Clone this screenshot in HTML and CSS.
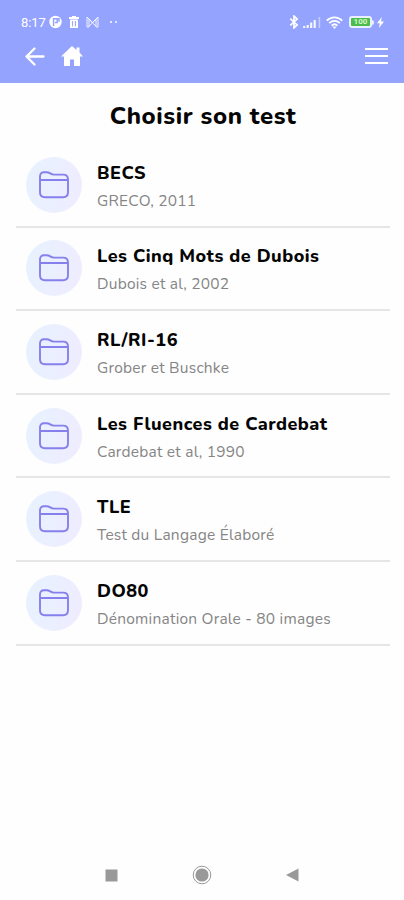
FILE: index.html
```html
<!DOCTYPE html>
<html lang="fr">
<head>
  <meta charset="UTF-8" />
  <meta name="viewport" content="width=device-width, initial-scale=1.0"/>
  <title>Choisir son test</title>
  <link rel="stylesheet" href="styles.css">
</head>
<body>
  <!-- folder icon shared by every row -->
  <svg class="sprite" aria-hidden="true">
    <symbol id="folder" viewBox="0 0 30 28">
      <path d="M1 9V5.5C1 2.800 2.400 1.200 5 1.200h2.600c3.400 0 3.800 2.400 7.200 2.400h9.400c3.400 0 4.800 1.700 4.800 4.800v12.800c0 3.400-1.600 5-5 5H6c-3.400 0-5-1.600-5-5V9h28"/>
    </symbol>
  </svg>

  <header class="header">
    <div class="status">
      <div class="status-left">
        <span class="clock">8:17</span>
        <svg width="13" height="14" viewBox="0 0 13 14"><circle cx="6.5" cy="7" r="6.2" fill="#fff"/><path d="M4.600 11V3.800h3.600v3.600H6M8.200 3.800h1.800v3" fill="none" stroke="#94a3fd" stroke-width="1.5"/></svg>
        <svg class="trash" width="10" height="12" viewBox="0 0 10 12"><path d="M0 1h3V0h4v1h3v2H0zM1 3.6h8V12H1z" fill="#fff"/><path d="M3.6 5v5.4M6.4 5v5.4" stroke="#94a3fd" stroke-width="1"/></svg>
        <svg class="mail" width="13" height="12" viewBox="0 0 13 12"><path d="M1 1v10h2V3l3.5 4L10 3v8h2V1L6.5 6.5zM3 10l3.5-3 3.5 3" fill="none" stroke="#fff" stroke-width="1" opacity=".85"/></svg>
        <span class="dots"><i></i><i></i></span>
      </div>
      <div class="status-right">
        <svg width="10" height="14" viewBox="0 0 10 15"><path d="M1 4l7.4 6.6L5 13.8V1.2l3.4 3.2L1 11" fill="none" stroke="#fff" stroke-width="1.8"/></svg>
        <svg class="signal" width="18" height="12" viewBox="0 0 18 12"><path d="M1.2 12v-2M4.700 12V9M8.200 12V6.500M11.700 12V4" stroke="#fff" stroke-width="2.200" opacity=".9"/><path d="M16.400 12V1" stroke="#fff" stroke-width="1.600" opacity=".45"/></svg>
        <svg class="wifi" width="17" height="13" viewBox="0 0 17 13"><path d="M.8 4.6c4.4-4.4 11-4.4 15.4 0M3.2 7.2c3.2-3 7.4-3 10.6 0M5.6 9.6c1.8-1.6 4-1.6 5.8 0" fill="none" stroke="#fff" stroke-width="1.8"/><path d="M6.3 10.4h4.4L8.5 13z" fill="#fff"/></svg>
        <span class="battery">100</span>
        <span class="battery-tip"></span>
        <svg class="bolt" width="7" height="11" viewBox="0 0 7 11"><path d="M4.8 0L0 6.2h2.8L2 11l5-6.600H4z" fill="#fff"/></svg>
      </div>
    </div>
    <nav class="navbar">
      <svg class="back" width="20" height="19" viewBox="0 0 20 19"><path d="M18.5 9.500H2M9.500 1.500l-8 8 8 8" fill="none" stroke="#fff" stroke-width="2.300" stroke-linecap="round" stroke-linejoin="round"/></svg>
      <svg class="home" width="22" height="20" viewBox="0 0 22 20"><path d="M11 0l4.500 4V1.600h3V6.600L22 10.400h-3V20h-6v-6.500H9V20H3v-9.600H0z" fill="#fff"/></svg>
      <div class="menu"><span></span><span></span><span></span></div>
    </nav>
  </header>

  <main class="content">
    <h1>Choisir son test</h1>
    <ul class="tests">
      <li class="test">
        <div class="icon"><svg class="folder"><use href="#folder"/></svg></div>
        <div class="text"><h2>BECS</h2><p>GRECO, 2011</p></div>
      </li>
      <li class="test">
        <div class="icon"><svg class="folder"><use href="#folder"/></svg></div>
        <div class="text"><h2>Les Cinq Mots de Dubois</h2><p>Dubois et al, 2002</p></div>
      </li>
      <li class="test">
        <div class="icon"><svg class="folder"><use href="#folder"/></svg></div>
        <div class="text"><h2>RL/RI-16</h2><p>Grober et Buschke</p></div>
      </li>
      <li class="test">
        <div class="icon"><svg class="folder"><use href="#folder"/></svg></div>
        <div class="text"><h2>Les Fluences de Cardebat</h2><p>Cardebat et al, 1990</p></div>
      </li>
      <li class="test">
        <div class="icon"><svg class="folder"><use href="#folder"/></svg></div>
        <div class="text"><h2>TLE</h2><p>Test du Langage Élaboré</p></div>
      </li>
      <li class="test">
        <div class="icon"><svg class="folder"><use href="#folder"/></svg></div>
        <div class="text"><h2>DO80</h2><p>Dénomination Orale - 80 images</p></div>
      </li>
    </ul>
  </main>

  <footer class="system-nav">
    <svg width="13" height="13" viewBox="0 0 13 13"><path d="M.5.5h12v12H.5z"/></svg>
    <svg width="20" height="20" viewBox="0 0 20 20"><circle cx="10" cy="10" r="6.6"/><circle class="ring" cx="10" cy="10" r="8.8"/></svg>
    <svg width="13" height="14" viewBox="0 0 13 14"><path d="M0 7L12.5.5v13z"/></svg>
  </footer>
</body>
</html>
```
FILE: styles.css
```css
* {
  box-sizing: border-box;
}
body {
  display: flex;
  flex-direction: column;
  height: 100vh;
  margin: 0;
  background-color: #fefefe;
  color: #050505;
  font-family: Nunito, "Open Sans", sans-serif;
}
svg {
  display: block;
  flex: none;
}
.sprite {
  width: 0;
  height: 0;
  position: absolute;
}
.header {
  height: 83px;
  background-color: #94a3fd;
  color: #fff;
}
.status {
  display: flex;
  justify-content: space-between;
  height: 44px;
  padding: 0 20px 0 21px;
}
.status-left, .status-right {
  display: flex;
  align-items: center;
}
.clock {
  width: 28px;
  font-family: Roboto, sans-serif;
  font-size: 13px;
  letter-spacing: -0.1px;
}
.trash {
  margin-left: 7px;
}
.mail {
  margin-left: 7px;
}
.dots {
  display: flex;
  gap: 3px;
  margin-left: 11px;
}
.dots i {
  width: 2px;
  height: 2px;
  border-radius: 50%;
  background-color: #fff;
}
.signal {
  margin-left: 4px;
}
.wifi {
  margin-left: 5px;
}
.battery {
  width: 23px;
  height: 12px;
  margin-left: 6px;
  border: 2px solid #e9effc;
  border-radius: 3px;
  background-color: #4bbd4f;
  font: bold 8px/8px Roboto, sans-serif;
  text-align: center;
  color: #d4f5c8;
}
.battery-tip {
  width: 2px;
  height: 5px;
  border-radius: 0 2px 2px 0;
  background-color: #e9effc;
}
.bolt {
  margin-left: 3px;
}
.navbar {
  display: flex;
  align-items: center;
  height: 24px;
  padding: 0 16px 0 25px;
}
.home {
  margin-left: 16px;
}
.menu {
  display: flex;
  flex-direction: column;
  gap: 5px;
  width: 23px;
  margin-left: auto;
}
.menu span {
  height: 2px;
  background-color: #fff;
}
.content {
  flex: 1;
  padding: 0 14px 0 16px;
}
h1 {
  height: 61px;
  margin: 0;
  padding-top: 16px;
  font-size: 24px;
  line-height: 34px;
  font-weight: 800;
  letter-spacing: 0.6px;
  text-align: center;
}
.tests {
  margin: 0;
  padding: 0;
  list-style: none;
}
.test {
  display: flex;
  align-items: center;
  height: 83.6px;
  padding-left: 10px;
  border-bottom: 2px solid #e6e6e6;
}
.icon {
  display: flex;
  align-items: center;
  justify-content: center;
  width: 56px;
  height: 56px;
  border-radius: 50%;
  background: linear-gradient(100deg, #e7f2ff, #efecff);
}
.folder {
  width: 30px;
  height: 28px;
  fill: none;
  stroke: #8580ec;
  stroke-width: 1.9;
}
.text {
  margin-left: 15px;
  padding-top: 3px;
  white-space: nowrap;
}
h2 {
  margin: 0;
  font-size: 18px;
  line-height: 28px;
  font-weight: 800;
  letter-spacing: 0.5px;
}
.text p {
  margin: 0;
  font-size: 15.5px;
  line-height: 27px;
  letter-spacing: 0.23px;
  color: #858585;
}
.system-nav {
  display: flex;
  align-items: center;
  justify-content: space-between;
  height: 50px;
  padding: 0 105px;
  fill: #999;
}
.ring {
  fill: none;
  stroke: #999;
}
```
